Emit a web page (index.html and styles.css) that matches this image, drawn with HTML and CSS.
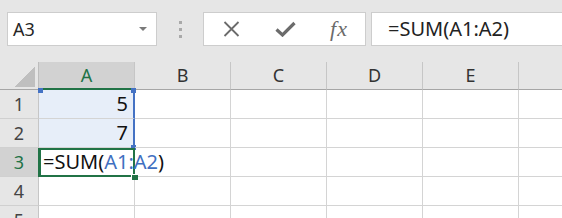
FILE: index.html
```html
<!DOCTYPE html>
<html lang="en">
<head>
    <meta charset="UTF-8">
    <title>Sheet</title>
    <link rel="stylesheet" href="styles.css">
</head>
<body>
    <!-- Barra de fórmulas -->
    <div class="toolbar">
        <div class="name-box">
            <span>A3</span>
            <span class="caret"></span>
        </div>
        <div class="grip"><i></i><i></i><i></i></div>
        <div class="fx-buttons">
            <span class="fx-btn">
                <svg width="17" height="16" viewBox="0 0 17 16"><path d="M1.5 1 L15.5 15 M15.5 1 L1.5 15" stroke="#6b6b6b" stroke-width="1.8" fill="none"/></svg>
            </span>
            <span class="fx-btn">
                <svg width="21" height="16" viewBox="0 0 21 16"><path d="M1.5 8.5 L7.5 14 L19.5 2" stroke="#6b6b6b" stroke-width="3.2" fill="none"/></svg>
            </span>
            <span class="fx-btn fx-text">fx</span>
        </div>
        <div class="formula-input">=SUM(A1:A2)</div>
    </div>

    <!-- Planilha -->
    <div class="sheet">
        <div class="corner"><span class="tri"></span></div>
        <div class="col-head selected">A</div>
        <div class="col-head">B</div>
        <div class="col-head">C</div>
        <div class="col-head">D</div>
        <div class="col-head">E</div>
        <div class="col-head"></div>

        <div class="row-head">1</div>
        <div class="cell num in-range first">5</div>
        <div class="cell"></div><div class="cell"></div><div class="cell"></div><div class="cell"></div><div class="cell"></div>

        <div class="row-head">2</div>
        <div class="cell num in-range last">7</div>
        <div class="cell"></div><div class="cell"></div><div class="cell"></div><div class="cell"></div><div class="cell"></div>

        <div class="row-head selected">3</div>
        <div class="cell active">=SUM(<span class="ref">A1:A2</span>)</div>
        <div class="cell"></div><div class="cell"></div><div class="cell"></div><div class="cell"></div><div class="cell"></div>

        <div class="row-head">4</div>
        <div class="cell"></div><div class="cell"></div><div class="cell"></div><div class="cell"></div><div class="cell"></div><div class="cell"></div>

        <div class="row-head">5</div>
        <div class="cell"></div><div class="cell"></div><div class="cell"></div><div class="cell"></div><div class="cell"></div><div class="cell"></div>
    </div>
</body>
</html>
```

FILE: styles.css
```css
* {
    margin: 0;
    padding: 0;
    box-sizing: border-box;
    font-family: "Noto Sans", sans-serif;
}

body {
    background-color: #e6e6e6;
    width: 562px;
    height: 218px;
    overflow: hidden;
}

/* Barra de fórmulas */
.toolbar {
    display: flex;
    height: 62px;
    padding-top: 12px;
    padding-left: 7px;
    align-items: flex-start;
}

.name-box {
    width: 150px;
    height: 34px;
    background: white;
    border: 1px solid #cdcdcd;
    display: flex;
    align-items: center;
    justify-content: space-between;
    padding: 0 9px 0 5px;
    font-size: 18px;
    color: #262626;
}

.caret {
    width: 0;
    height: 0;
    border-top: 4px solid #7a7a7a;
    border-left: 4px solid transparent;
    border-right: 4px solid transparent;
}

.grip {
    width: 46px;
    height: 34px;
    display: flex;
    flex-direction: column;
    align-items: center;
    justify-content: center;
    gap: 4px;
}

.grip i {
    display: block;
    width: 3px;
    height: 3px;
    background: #a9a9a9;
}

.fx-buttons {
    width: 163px;
    height: 34px;
    background: white;
    border: 1px solid #cdcdcd;
    display: grid;
    grid-template-columns: repeat(3, 54px);
    align-items: center;
}

.fx-btn {
    display: flex;
    justify-content: center;
    align-items: center;
}

.fx-text {
    font-family: "Liberation Serif", serif;
    font-style: italic;
    font-size: 22px;
    color: #6b6b6b;
    letter-spacing: 1px;
}

.formula-input {
    flex: 1;
    margin-left: 5px;
    margin-right: -4px;
    height: 34px;
    background: white;
    border: 1px solid #cdcdcd;
    padding-left: 16px;
    font-size: 20px;
    line-height: 31px;
    color: #222;
}

/* Planilha */
.sheet {
    display: grid;
    grid-template-columns: 39px repeat(6, 96px);
    grid-template-rows: 28px repeat(5, 29px);
    background: white;
}

.corner {
    background: #e6e6e6;
    border-bottom: 1px solid #a6a6a6;
    border-right: 1px solid #bdbdbd;
    display: flex;
    justify-content: flex-end;
    align-items: flex-end;
    padding: 0 3px 2px 0;
}

.tri {
    width: 20px;
    height: 20px;
    background: linear-gradient(to bottom right, transparent 50%, #bfbfbf 50%);
}

.col-head {
    background: #e6e6e6;
    border-right: 1px solid #c6c6c6;
    border-bottom: 1px solid #a6a6a6;
    text-align: center;
    font-size: 18px;
    line-height: 27px;
    color: #333;
}

.col-head.selected {
    background: #d2d2d2;
    color: #217346;
    border-bottom: 2px solid #217346;
}

.row-head {
    background: #e6e6e6;
    border-right: 1px solid #c6c6c6;
    border-bottom: 1px solid #d0d0d0;
    text-align: center;
    font-size: 18px;
    line-height: 28px;
    color: #444;
}

.row-head.selected {
    background: #d2d2d2;
    color: #217346;
    border-right: 1px solid #217346;
}

.cell {
    border-right: 1px solid #d4d4d4;
    border-bottom: 1px solid #d4d4d4;
    font-size: 20px;
    line-height: 28px;
    color: #111;
    white-space: nowrap;
    position: relative;
}

.num {
    text-align: right;
    padding-right: 5px;
}

.in-range {
    background: #e7eef9;
    border-right: 2px solid #4472c4;
}

.in-range.first::before,
.in-range.first::after,
.in-range.last::after {
    content: "";
    position: absolute;
    width: 5px;
    height: 5px;
    background: #4472c4;
}

.in-range.first::before {
    left: -1px;
    top: -2px;
}

.in-range.first::after {
    right: -3px;
    top: -2px;
}

.in-range.last::after {
    right: -3px;
    bottom: -3px;
}

.active {
    padding-left: 4px;
    box-shadow: inset 0 0 0 2px #217346, -1px 0 0 #217346;
    border-right: none;
    border-bottom: none;
    z-index: 1;
}

.active::after {
    content: "";
    position: absolute;
    right: -3px;
    bottom: -3px;
    width: 6px;
    height: 5px;
    background: #217346;
    border-left: 1px solid white;
    border-top: 1px solid white;
}

.ref {
    color: #3f6fc1;
}
```
